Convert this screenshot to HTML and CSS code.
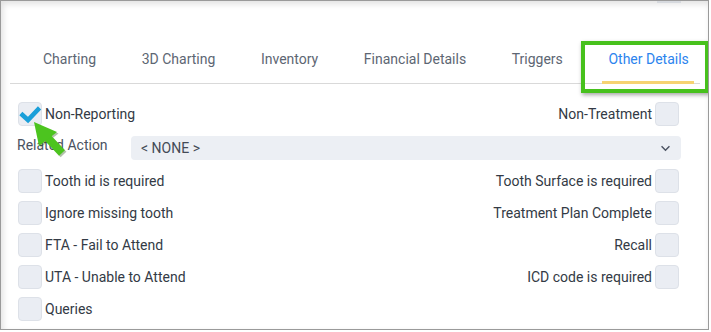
FILE: index.html
```html
<!DOCTYPE html>
<html lang="en">
  <head>
    <meta charset="UTF-8" />
    <meta name="viewport" content="width=device-width, initial-scale=1.0" />
    <title>Other Details</title>
    <link rel="stylesheet" href="styles.css">
  </head>
  <body>
    <div class="frame">
      <div class="scroll-nub"></div>

      <ul class="tabs">
        <li class="tab">Charting</li>
        <li class="tab">3D Charting</li>
        <li class="tab">Inventory</li>
        <li class="tab">Financial Details</li>
        <li class="tab">Triggers</li>
        <li class="tab active">Other Details</li>
      </ul>
      <div class="highlight"></div>

      <form class="details">
        <div class="row">
          <label class="check">
            <span class="box checked">
              <svg viewBox="0 0 24 24" width="24" height="24">
                <path d="M4.5 13 L10 18 L20 7.5" fill="none" stroke="#1a9fd9" stroke-width="4.5" stroke-linecap="square" />
              </svg>
            </span>
            Non-Reporting
          </label>
          <label class="check right">
            Non-Treatment
            <span class="box"></span>
          </label>
        </div>

        <div class="row select-row">
          <span class="field-label">Related Action</span>
          <div class="select">
            <span>&lt; NONE &gt;</span>
            <svg viewBox="0 0 12 8" width="11" height="7">
              <path d="M1.5 1.5 L6 6 L10.5 1.5" fill="none" stroke="#4a5261" stroke-width="1.6" />
            </svg>
          </div>
        </div>

        <div class="row">
          <label class="check"><span class="box"></span>Tooth id is required</label>
          <label class="check right">Tooth Surface is required<span class="box"></span></label>
        </div>
        <div class="row">
          <label class="check"><span class="box"></span>Ignore missing tooth</label>
          <label class="check right">Treatment Plan Complete<span class="box"></span></label>
        </div>
        <div class="row">
          <label class="check"><span class="box"></span>FTA - Fail to Attend</label>
          <label class="check right">Recall<span class="box"></span></label>
        </div>
        <div class="row">
          <label class="check"><span class="box"></span>UTA - Unable to Attend</label>
          <label class="check right">ICD code is required<span class="box"></span></label>
        </div>
        <div class="row">
          <label class="check"><span class="box"></span>Queries</label>
        </div>
      </form>

      <svg class="pointer" viewBox="0 0 38 40" width="38" height="40">
        <g fill="#24520f" stroke="#24520f" opacity="0.35" transform="translate(1.5 1.5)">
          <path d="M15 17 L31 34" stroke-width="8" />
          <path d="M3 3 L26 13 L8 27 Z" stroke="none" />
        </g>
        <path d="M15 17 L31 34" stroke="#4cc41f" stroke-width="8" />
        <path d="M3 3 L26 13 L8 27 Z" fill="#4cc41f" />
      </svg>
    </div>
  </body>
</html>
```

FILE: styles.css
```css
body {
  margin: 0;
  padding: 0;
  font-family: Roboto, "Liberation Sans", sans-serif;
  font-size: 14px;
  background-color: #ffffff;
}

.frame {
  position: relative;
  width: 707px;
  height: 328px;
  border: 1px solid #9a9a9a;
  box-shadow: inset 2px 3px 6px rgba(0, 0, 0, 0.12);
  overflow: hidden;
}

.scroll-nub {
  position: absolute;
  top: 0;
  left: 656px;
  width: 24px;
  height: 2px;
  background-color: #d6d9de;
}

.tabs {
  display: flex;
  list-style: none;
  margin: 39px 8px 0 9px;
  padding: 0 0 0 27px;
  border-bottom: 1px solid #d9d9d9;
}

.tab {
  padding: 11px 5px 14px 6px;
  margin-right: 34.6px;
  color: #5d6673;
  white-space: nowrap;
  border-bottom: 3px solid transparent;
  margin-bottom: -1px;
}

.tab.active {
  color: #2c84ee;
  border-bottom-color: #f6d372;
}

.highlight {
  position: absolute;
  top: 40px;
  left: 580px;
  width: 120px;
  height: 44px;
  border: 4px solid #47c11d;
  box-shadow: 1px 2px 4px rgba(0, 0, 0, 0.35);
}

.details {
  padding: 14px 27px 0 16px;
}

.row {
  display: flex;
  justify-content: space-between;
  align-items: center;
  height: 32px;
  color: #333a45;
}

.check {
  display: flex;
  align-items: center;
  gap: 3px;
  margin-left: 1px;
}

.check.right {
  margin-left: 0;
  margin-right: 2px;
}

.box {
  display: inline-block;
  width: 22px;
  height: 22px;
  border: 1px solid #dde1e8;
  border-radius: 4px;
  background-color: #eaedf3;
}

.box svg {
  display: block;
  margin: -1px;
}

.select-row {
  height: 36px;
  margin-bottom: -1px;
}

.field-label {
  color: #4a5261;
  padding-bottom: 6px;
}

.select {
  display: flex;
  justify-content: space-between;
  align-items: center;
  width: 530px;
  height: 24px;
  padding: 0 10px;
  border-radius: 4px;
  background-color: #eceff4;
  color: #444b57;
}

.pointer {
  position: absolute;
  top: 118px;
  left: 30px;
}
```
